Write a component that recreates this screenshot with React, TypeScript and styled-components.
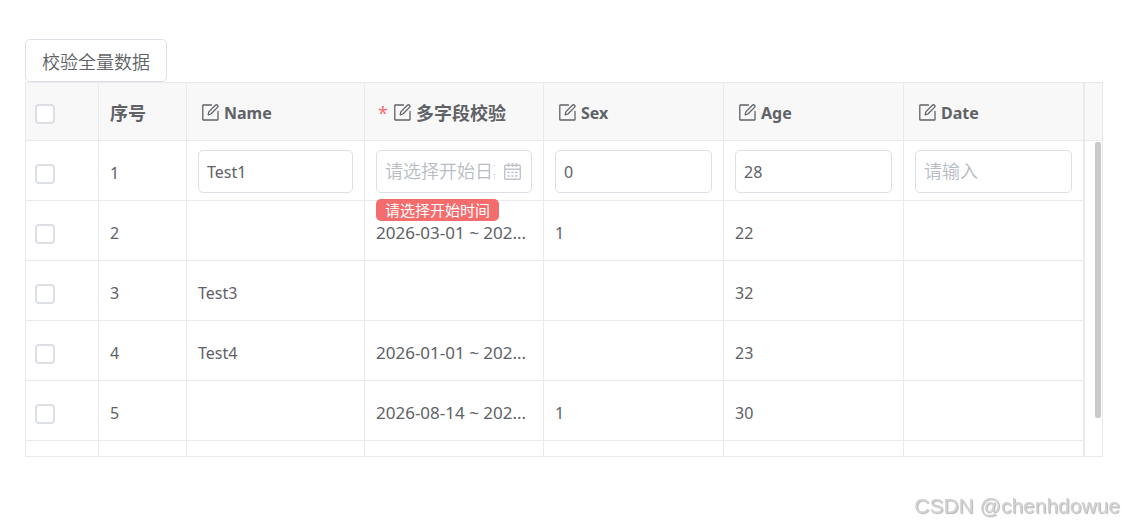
import React from "react";
import styled, { createGlobalStyle, css } from "styled-components";

const GlobalStyle = createGlobalStyle`
  * { box-sizing: border-box; }
  body {
    margin: 0;
    background: #fff;
    color: #606266;
    font-family: "Noto Sans", "Noto Sans CJK SC", sans-serif;
    font-size: 16px;
    line-height: 24px;
  }
`;

const Page = styled.main`
  padding: 39px 20px 0 25px;
`;

const CheckAllButton = styled.button`
  display: block;
  height: 43px;
  padding: 0 16px;
  border: 1px solid #dcdfe6;
  border-radius: 5px;
  background: #fff;
  color: #606266;
  font-family: "Noto Sans CJK SC", sans-serif;
  font-size: 18px;
  font-weight: 350;
`;

const TableFrame = styled.section`
  display: flex;
  max-height: 375px;
  border: 1px solid #e8eaec;
  overflow: hidden;
`;

const Table = styled.table`
  flex: 1;
  width: 100%;
  min-width: 0;
  table-layout: fixed;
  border-collapse: separate;
  border-spacing: 0;
`;

const Col = styled.col<{ $width?: number }>`
  ${({ $width }) => $width && css`width: ${$width}px;`}
`;

const cellBase = css`
  padding: 4px 10px 0 11px;
  border-right: 1px solid #e8eaec;
  border-bottom: 1px solid #e8eaec;
  text-align: left;
  vertical-align: middle;
`;

const HeadCell = styled.th`
  ${cellBase}
  height: 58px;
  padding-top: 2px;
  background: #f8f8f9;
  font-weight: 700;
`;

const Cell = styled.td<{ $editing?: boolean; $wide?: boolean }>`
  ${cellBase}
  height: 60px;
  white-space: nowrap;
  ${({ $wide }) => $wide && css`font-size: 17px;`}
  ${({ $editing }) => $editing && css`padding: 2px 11px 0 11px;`}
`;

const CutCell = styled.td`
  height: 16px;
  padding: 0;
  border-right: 1px solid #e8eaec;
`;

const HeadLabel = styled.span<{ $cjk?: boolean; $indent?: boolean }>`
  display: flex;
  align-items: center;
  gap: 5px;
  padding-left: ${({ $indent }) => ($indent ? 4 : 0)}px;
  font-size: ${({ $cjk }) => ($cjk ? 18 : 16)}px;
  white-space: nowrap;
`;

const Required = styled.span`
  width: 13px;
  padding-left: 2px;
  color: #f56c6c;
  font-weight: 400;
`;

const Tick = styled.input`
  appearance: none;
  display: block;
  width: 20px;
  height: 20px;
  margin: 2px 0 0 -2px;
  border: 2px solid #dcdfe6;
  border-radius: 4px;
  background: #fff;
`;

const Field = styled.div`
  position: relative;
  display: flex;
  align-items: center;
  gap: 9px;
  height: 43px;
  padding: 0 10px 0 8px;
  border: 1px solid #dcdfe6;
  border-radius: 5px;
  background: #fff;
`;

const FieldInput = styled.input`
  flex: 1;
  width: 100%;
  min-width: 0;
  height: 32px;
  padding: 0;
  border: 0;
  outline: 0;
  background: transparent;
  color: #606266;
  font: inherit;
  &::placeholder {
    color: #b8bcc4;
    font-size: 18px;
    font-weight: 350;
    font-family: "Noto Sans CJK SC", sans-serif;
  }
`;

const ErrorTip = styled.span`
  position: absolute;
  top: 48px;
  left: -1px;
  z-index: 2;
  padding: 0 9px;
  border-radius: 5px;
  background: #f56c6c;
  color: #fff;
  font-size: 15px;
  line-height: 22px;
`;

const Gutter = styled.div`
  display: flex;
  flex-direction: column;
  width: 18px;
  border-left: 1px solid #e8eaec;
`;

const GutterHead = styled.div`
  height: 58px;
  border-bottom: 1px solid #e8eaec;
  background: #f8f8f9;
`;

const Thumb = styled.div`
  align-self: flex-end;
  width: 6px;
  height: 276px;
  margin: 1px 1px 0 0;
  border-radius: 2px;
  background: #c9c9c9;
`;

const Watermark = styled.footer`
  position: fixed;
  right: 3px;
  bottom: 8px;
  color: #d2d2d2;
  font-family: "Liberation Sans", sans-serif;
  font-size: 21px;
  text-shadow: 1px 1px 1px #b4b4b4;
`;

const EditIcon = () => (
  <svg width="17" height="17" viewBox="0 0 17 17" fill="none" stroke="currentColor" strokeWidth="1.3" aria-hidden="true">
    <path d="M9.5 1H1.2q-.4 0-.4.4v14.2q0 .4.4.4h14.4q.4 0 .4-.4V7.4" strokeLinecap="round" />
    <path d="M6.2 10.8l.6-2.9 6.6-6.6a1.45 1.45 0 0 1 2.1 2.1L8.9 10z" strokeLinejoin="round" />
  </svg>
);

const CalendarIcon = () => (
  <svg width="17" height="17" viewBox="0 0 17 17" fill="none" stroke="#c0c4cc" strokeWidth="1.4" aria-hidden="true">
    <rect x="0.7" y="2.2" width="15.6" height="14" rx="1" />
    <path d="M0.7 6.2h15.6M4.5 0v4M12.5 0v4M8.5 0v4" />
    <path d="M3.5 9.5h2.4M7.3 9.5h2.4M11.1 9.5h2.4M3.5 13h2.4M7.3 13h2.4M11.1 13h2.4" />
  </svg>
);

const columns = [
  { title: "Name" },
  { title: "多字段校验", required: true },
  { title: "Sex" },
  { title: "Age" },
  { title: "Date" },
];

const rows = [
  { id: 2, name: "", range: "2026-03-01 ~ 202...", sex: "1", age: "22" },
  { id: 3, name: "Test3", range: "", sex: "", age: "32" },
  { id: 4, name: "Test4", range: "2026-01-01 ~ 202...", sex: "", age: "23" },
  { id: 5, name: "", range: "2026-08-14 ~ 202...", sex: "1", age: "30" },
];

export default function App() {
  return (
    <>
      <GlobalStyle />
      <Page>
        <CheckAllButton type="button">校验全量数据</CheckAllButton>
        <TableFrame>
          <Table>
            <colgroup>
              <Col $width={73} />
              <Col $width={88} />
              <Col $width={178} />
              <Col $width={179} />
              <Col />
              <Col />
              <Col />
            </colgroup>
            <thead>
              <tr>
                <HeadCell><Tick type="checkbox" aria-label="全选" /></HeadCell>
                <HeadCell><HeadLabel $cjk>序号</HeadLabel></HeadCell>
                {columns.map(({ title, required }) => (
                  <HeadCell key={title}>
                    <HeadLabel $cjk={required} $indent={!required}>
                      {required && <Required>*</Required>}
                      <EditIcon />
                      {title}
                    </HeadLabel>
                  </HeadCell>
                ))}
              </tr>
            </thead>
            <tbody>
              <tr>
                <Cell><Tick type="checkbox" aria-label="1" /></Cell>
                <Cell>1</Cell>
                <Cell $editing><Field><FieldInput aria-label="Name" defaultValue="Test1" /></Field></Cell>
                <Cell $editing>
                  <Field>
                    <FieldInput aria-label="多字段校验" placeholder="请选择开始日期" />
                    <CalendarIcon />
                    <ErrorTip role="alert">请选择开始时间</ErrorTip>
                  </Field>
                </Cell>
                <Cell $editing><Field><FieldInput aria-label="Sex" defaultValue="0" /></Field></Cell>
                <Cell $editing><Field><FieldInput aria-label="Age" defaultValue="28" /></Field></Cell>
                <Cell $editing><Field><FieldInput aria-label="Date" placeholder="请输入" /></Field></Cell>
              </tr>
              {rows.map((row) => (
                <tr key={row.id}>
                  <Cell><Tick type="checkbox" aria-label={String(row.id)} /></Cell>
                  <Cell>{row.id}</Cell>
                  <Cell>{row.name}</Cell>
                  <Cell $wide>{row.range}</Cell>
                  <Cell>{row.sex}</Cell>
                  <Cell>{row.age}</Cell>
                  <Cell />
                </tr>
              ))}
              <tr>
                <CutCell /><CutCell /><CutCell /><CutCell /><CutCell /><CutCell /><CutCell />
              </tr>
            </tbody>
          </Table>
          <Gutter>
            <GutterHead />
            <Thumb />
          </Gutter>
        </TableFrame>
        <Watermark>CSDN @chenhdowue</Watermark>
      </Page>
    </>
  );
}
